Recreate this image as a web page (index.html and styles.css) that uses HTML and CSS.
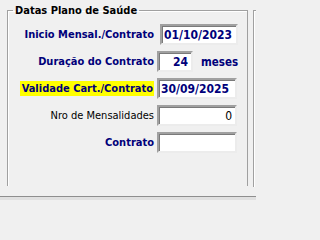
FILE: index.html
```html
<!DOCTYPE html>
<html>
<head>
<meta charset="utf-8">
<link rel="stylesheet" href="styles.css">
</head>
<body>
<div class="main">
  <fieldset class="group">
    <legend class="legend">Datas Plano de Saúde</legend>
    <div class="row r1">
      <label class="lbl bold">Inicio Mensal./Contrato</label>
      <div class="edit w-date first bold">01/10/2023</div>
    </div>
    <div class="row r2">
      <label class="lbl bold">Duração do Contrato</label>
      <div class="edit w-num bold right">24</div>
      <span class="unit bold">meses</span>
    </div>
    <div class="row r3">
      <label class="lbl bold"><span class="hl">Validade Cart./Contrato</span></label>
      <div class="edit w-wide bold">30/09/2025</div>
    </div>
    <div class="row r4">
      <label class="lbl plain">Nro de Mensalidades</label>
      <div class="edit w-wide right plain">0</div>
    </div>
    <div class="row r5">
      <label class="lbl bold">Contrato</label>
      <div class="edit w-wide"></div>
    </div>
  </fieldset>
  <div class="group2"></div>
</div>
<div class="footer"></div>
</body>
</html>
```
FILE: styles.css
```css
html, body {
  margin: 0;
  padding: 0;
  width: 256px;
  height: 200px;
  overflow: hidden;
  background: #f0f0f0;
  font-family: "DejaVu Sans Condensed", "DejaVu Sans", sans-serif;
  font-size: 11px;
}
.main {
  display: flex;
  height: 196px;
  padding-top: 4px;
  box-sizing: border-box;
}
.group {
  margin: 0 0 0 7px;
  width: 242px;
  height: 182px;
  box-sizing: border-box;
  border: 1px solid #a0a0a0;
  border-bottom: none;
  box-shadow: inset 1px 1px 0 #fff;
  padding: 7px 0 0 0;
  min-width: 0;
}
.legend {
  margin-left: 5px;
  padding: 0 2px 0 2px;
  font-weight: bold;
  color: #000;
  font-size: 11px;
  line-height: 13px;
}
.group2 {
  margin-left: 5px;
  margin-top: 6px;
  width: 2px;
  height: 176px;
  border-left: 1px solid #a0a0a0;
  border-top: 1px solid #a0a0a0;
  box-shadow: inset 1px 1px 0 #fff;
}
.row {
  display: flex;
  align-items: center;
  height: 21px;
  margin-bottom: 6px;
}
.lbl {
  width: 146px;
  text-align: right;
  flex: none;
  line-height: 17px;
}
.bold { font-weight: bold; color: #00007a; }
.plain { font-weight: normal; color: #000; }
.hl {
  background: #ffff00;
  padding: 1px 1px 1px 2px;
}
.edit {
  box-sizing: border-box;
  height: 21px;
  margin-left: 3px;
  background: #fff;
  border: 2px solid;
  border-color: #a0a0a0 #ececec #ececec #a0a0a0;
  box-shadow: inset 1px 1px 0 #7a7a7a;
  padding: 2px 3px 0 2px;
  font-size: 12px;
  line-height: 15px;
  white-space: nowrap;
}
.first { margin-left: 6px; }
.w-date { width: 78px; }
.w-num { width: 36px; }
.w-wide { width: 80px; }
.right { text-align: right; }
.unit {
  margin-left: 8px;
  font-size: 11.5px;
}
.footer {
  height: 4px;
  border-top: 1px solid #8e8e8e;
  background: #e0e0e0;
}
```
